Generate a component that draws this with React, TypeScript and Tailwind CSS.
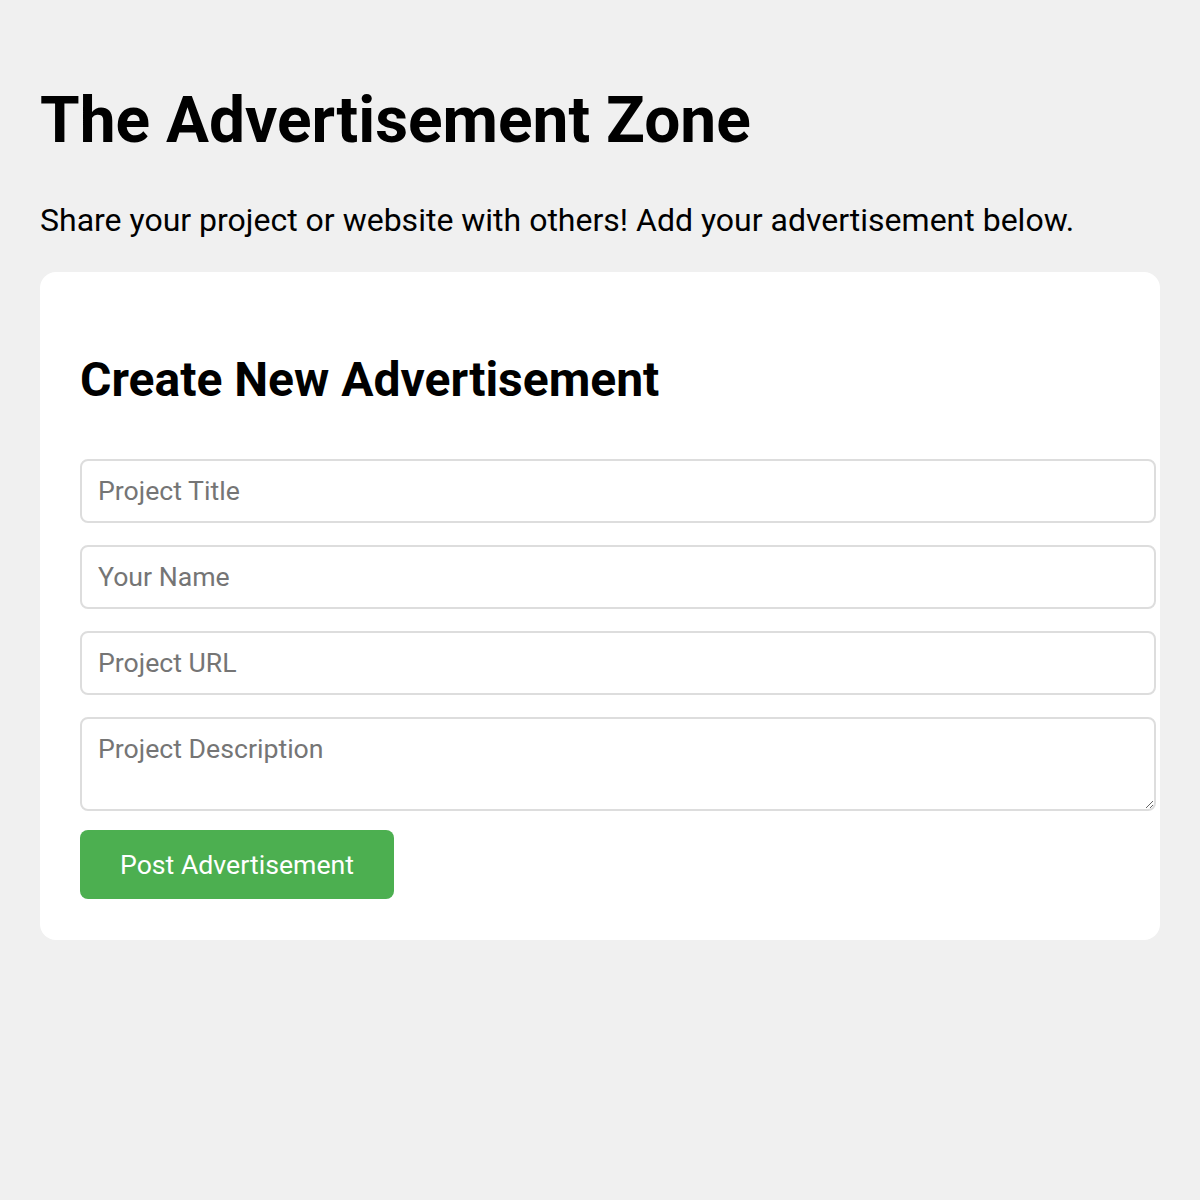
import React from "react";

const fieldClass =
  "block w-[1076px] rounded-[8px] border-2 border-[#dddddd] bg-white px-4 text-[26.67px] text-black outline-none placeholder:text-[#757575]";

export default function App() {
  return (
    <div className="min-h-[1200px] bg-[#f0f0f0] px-10 pt-10 font-['Roboto',sans-serif] text-black">
      <h1 className="mt-[43px] text-[64px] leading-[75px] font-bold">
        The Advertisement Zone
      </h1>
      <p className="mt-[44px] text-[32px] leading-[37.5px]">
        Share your project or website with others! Add your advertisement below.
      </p>

      <div className="mt-[32px] rounded-[16px] bg-white px-10 pt-10 pb-[41px]">
        <h2 className="mt-[40px] text-[48px] leading-[56px] font-bold">
          Create New Advertisement
        </h2>

        <form
          className="mt-[51px] flex flex-col"
          onSubmit={(e) => e.preventDefault()}
        >
          <input
            type="text"
            placeholder="Project Title"
            className={fieldClass + " h-[64px]"}
          />
          <input
            type="text"
            placeholder="Your Name"
            className={fieldClass + " mt-[22px] h-[64px]"}
          />
          <input
            type="url"
            placeholder="Project URL"
            className={fieldClass + " mt-[22px] h-[64px]"}
          />
          <textarea
            placeholder="Project Description"
            className={fieldClass + " mt-[22px] h-[94px] pt-[15px] pb-[13px] leading-[31.25px]"}
          />
          <div className="mt-[19px]">
            <button
              type="submit"
              className="h-[69px] rounded-[8px] bg-[#4caf50] px-10 pt-px text-[26.67px] text-white"
            >
              Post Advertisement
            </button>
          </div>
        </form>
      </div>
    </div>
  );
}
